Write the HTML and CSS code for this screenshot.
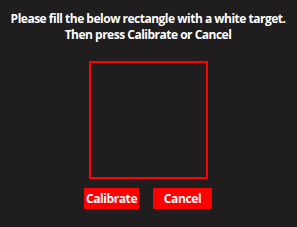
FILE: index.html
```html
<!DOCTYPE html>
<html lang="en">
<head>
    <meta charset="UTF-8">
    <title>Calibrate</title>
    <link rel="stylesheet" href="styles.css">
</head>
<body>
    <div class="container">
        <p class="message">Please fill the below rectangle with a white target.<br>Then press Calibrate or Cancel</p>
        <div class="target"></div>
        <div class="actions">
            <button class="btn">Calibrate</button>
            <button class="btn btn-cancel">Cancel</button>
        </div>
    </div>
</body>
</html>
```

FILE: styles.css
```css
body {
    margin: 0;
    padding: 0;
    background-color: #1f1d1e;
    font-family: "Open Sans", Arial, sans-serif;
    color: #ffffff;
}

.container {
    display: flex;
    flex-direction: column;
    align-items: center;
    padding-top: 11px;
    padding-right: 1px;
}

.message {
    margin: 0;
    font-size: 12px;
    font-weight: bold;
    line-height: 16px;
    letter-spacing: -0.5px;
    text-align: center;
    white-space: nowrap;
}

.target {
    width: 115px;
    height: 114px;
    margin-top: 18px;
    border: 2px solid #ff0000;
}

.actions {
    display: flex;
    gap: 14px;
    margin-top: 9px;
}

.btn {
    width: 55px;
    height: 21px;
    padding: 0;
    background-color: #ff0000;
    color: #ffffff;
    border: none;
    font-family: "Open Sans", Arial, sans-serif;
    font-size: 12px;
    font-weight: bold;
    letter-spacing: -0.4px;
}

.btn-cancel {
    width: 59px;
}
```
